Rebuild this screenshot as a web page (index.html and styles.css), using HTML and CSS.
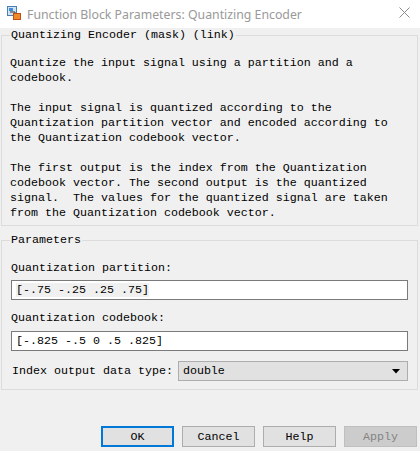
FILE: index.html
```html
<!DOCTYPE html>
<html lang="en">
<head>
  <meta charset="UTF-8" />
  <title>Function Block Parameters: Quantizing Encoder</title>
  <link rel="stylesheet" href="styles.css">
</head>
<body>
  <div class="titlebar">
    <svg class="app-icon" width="14" height="14" viewBox="0 0 14 14">
      <rect x="0.5" y="0.5" width="9" height="9" fill="#cfe3f5" stroke="#4a7fb0"/>
      <rect x="2" y="2" width="4" height="3" fill="#3d8fd8"/>
      <path d="M3 6 L8 6 L8 8" fill="none" stroke="#333" stroke-width="1"/>
      <rect x="6.5" y="7.5" width="7" height="6" fill="#f08a24" stroke="#c0501a"/>
    </svg>
    <span class="title">Function Block Parameters: Quantizing Encoder</span>
    <svg class="close" width="11" height="11" viewBox="0 0 11 11">
      <path d="M0.5 0.5 L10.5 10.5 M10.5 0.5 L0.5 10.5" stroke="#8a8a8a" stroke-width="1"/>
    </svg>
  </div>

  <div class="dialog">
    <fieldset class="group desc-group">
      <legend>Quantizing Encoder (mask) (link)</legend>
      <div class="desc">Quantize the input signal using a partition and a
codebook.

The input signal is quantized according to the
Quantization partition vector and encoded according to
the Quantization codebook vector.

The first output is the index from the Quantization
codebook vector. The second output is the quantized
signal.  The values for the quantized signal are taken
from the Quantization codebook vector.</div>
    </fieldset>

    <fieldset class="group params">
      <legend>Parameters</legend>
      <div class="field">
        <label>Quantization partition:</label>
        <div class="textbox"><span class="sel">[-.75 -.25 .25 .75]</span></div>
      </div>
      <div class="field">
        <label>Quantization codebook:</label>
        <div class="textbox">[-.825 -.5 0 .5 .825]</div>
      </div>
      <div class="select-row">
        <label>Index output data type:</label>
        <div class="dropdown">
          <span>double</span>
          <svg width="8" height="5" viewBox="0 0 8 5"><path d="M0 0 L8 0 L4 4.5 Z" fill="#000"/></svg>
        </div>
      </div>
    </fieldset>

    <div class="buttons">
      <button class="btn default">OK</button>
      <button class="btn">Cancel</button>
      <button class="btn">Help</button>
      <button class="btn disabled">Apply</button>
    </div>
  </div>
</body>
</html>
```

FILE: styles.css
```css
html, body {
  margin: 0;
  padding: 0;
}

body {
  width: 420px;
  height: 451px;
  background-color: #f0f0f0;
  font-family: "Liberation Mono", "DejaVu Sans Mono", monospace;
  font-size: 11.67px;
  line-height: 15px;
  color: #000;
  overflow: hidden;
}

.titlebar {
  height: 28px;
  background-color: #fff;
  display: flex;
  align-items: center;
  padding-left: 7px;
  padding-right: 10px;
}

.app-icon {
  margin-right: 6px;
  margin-top: -2px;
}

.title {
  flex: 1;
  font-family: "Noto Sans", "Open Sans", sans-serif;
  font-size: 12.3px;
  color: #999;
}

.close {
  margin-top: -3px;
}

.dialog {
  display: flex;
  flex-direction: column;
  height: 423px;
}

.group {
  margin: 0 2px 0 1px;
  padding: 0 9px;
  border: 1px solid #dcdcdc;
  min-width: 0;
}

.group legend {
  padding: 0 1px;
  margin-left: -1px;
  line-height: 15px;
}

.desc-group {
  padding-bottom: 4px;
}

.desc {
  white-space: pre;
  margin-top: 13px;
  margin-left: -1px;
}

.params {
  margin-top: 7px;
  padding-bottom: 8px;
}

.field {
  display: flex;
  flex-direction: column;
}

.field label {
  margin-top: 13px;
  margin-bottom: 4px;
}

.field + .field label {
  margin-top: 11px;
  margin-bottom: 5px;
}

.textbox {
  height: 18px;
  border: 1px solid #7a7a7a;
  background-color: #fff;
  padding-left: 4px;
  line-height: 18px;
  white-space: pre;
}

.sel {
  background-color: #f0f0f0;
}

.select-row {
  display: flex;
  align-items: center;
  margin-top: 10px;
}

.select-row label {
  margin-left: 1px;
  margin-right: 5px;
}

.dropdown {
  flex: 1;
  height: 18px;
  border: 1px solid #adadad;
  background-color: #e1e1e1;
  display: flex;
  align-items: center;
  justify-content: space-between;
  padding: 0 7px 0 4px;
}

.buttons {
  margin-top: auto;
  margin-bottom: 4px;
  display: flex;
  justify-content: flex-end;
  gap: 8px;
  padding-right: 3px;
}

.btn {
  width: 73px;
  height: 21px;
  margin: 0;
  padding: 0;
  border: 1px solid #adadad;
  background-color: #e1e1e1;
  font-family: inherit;
  font-size: 11.67px;
  color: #000;
}

.btn.default {
  border: 2px solid #0078d7;
}

.btn.disabled {
  background-color: #cccccc;
  border-color: #bfbfbf;
  color: #838383;
}
```
